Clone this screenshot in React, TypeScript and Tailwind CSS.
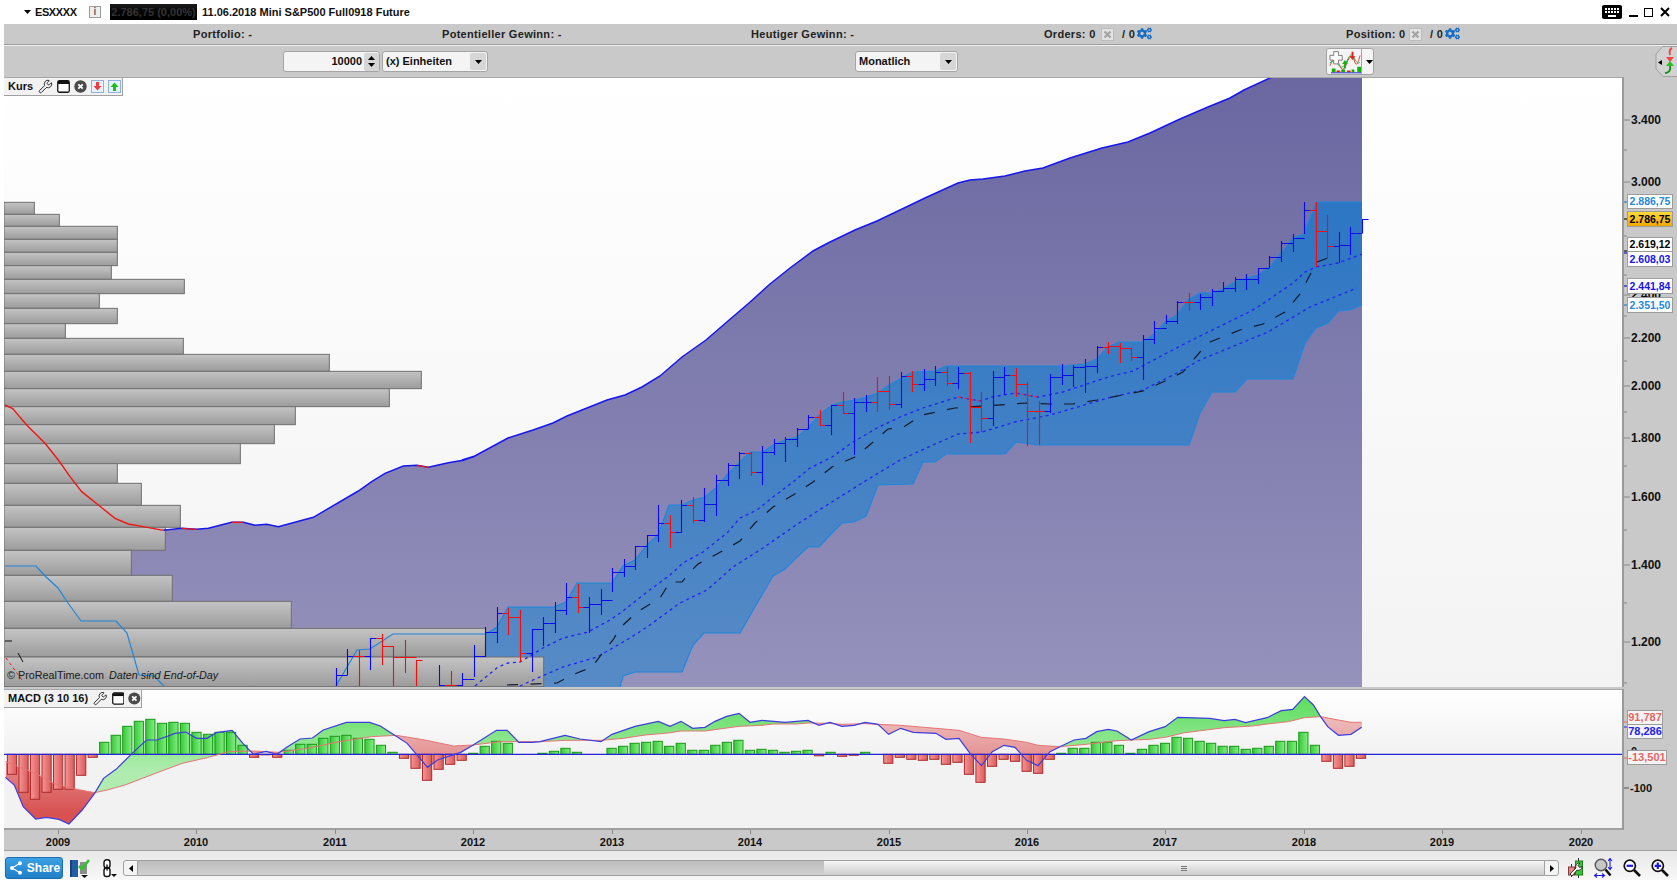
import React from 'react';
import { Wrench } from 'lucide-react';
import { FaCogs } from 'react-icons/fa';
import { MdKeyboard, MdShare } from 'react-icons/md';

type Pt = number[];

const toPts = (pts: Pt[]) => pts.map(([x, y]) => `${x},${y}`).join(' ');
// raw values were read off zoomed crops: x / sx + ox, y / 3 + oy
const crop = (raw: Pt[], ox: number, oy: number, sx = 3) => raw.map(([x, y]) => [ox + x / sx, oy + y / 3]);

// volume profile: [top, right], last entry closes the stack
const profile: Pt[] = [
  [67, 103], [103, 178], [139, 352], [178, 352], [217, 352], [257, 334], [298, 553], [341, 298], [385, 352],
  [431, 196], [475, 550], [523, 988], [574, 1264], [626, 1168], [680, 886], [734, 823], [791, 721], [851, 352],
  [910, 424], [976, 541], [1042, 496], [1111, 394], [1186, 517], [1264, 874], [1345, 1457], [1431, 1631], [1520, 0],
];

const redStart: Pt[] = crop([[15, 675], [38, 686], [80, 735], [135, 790], [175, 840], [210, 890], [245, 935], [295, 975], [345, 1015], [385, 1032], [430, 1040], [490, 1051]], 0, 180);
const blueLine: Pt[] = [
  ...crop([[490, 1051], [545, 1045], [590, 1048], [625, 1045], [695, 1027], [730, 1027], [765, 1036], [800, 1033], [835, 1040], [940, 1012], [1075, 933], [1115, 905], [1155, 880], [1210, 858], [1250, 856], [1285, 862], [1345, 848], [1390, 841], [1425, 828]], 0, 180),
  [462, 460], [473, 457], [508, 438], [533, 430], [553, 423], [567, 416], [587, 408], [607, 400], [625, 395], [642, 387], [660, 376], [682, 357], [706, 340], [728, 321], [749, 303], [770, 284], [790, 268], [813, 251], [828, 243], [855, 230], [877, 221],
  [900, 210], [925, 198], [958, 183], [970, 180], [983, 179], [1005, 176], [1025, 171], [1043, 168], [1070, 158], [1102, 148], [1128, 142], [1150, 133], [1180, 119], [1208, 107], [1230, 98], [1244, 90], [1272, 77],
];
const topLine: Pt[] = [...redStart, ...blueLine, [1362, 77]];
const redParts: Pt[][] = [
  redStart,
  crop([[545, 1045], [590, 1048]], 0, 180),
  crop([[695, 1027], [730, 1027]], 0, 180),
  crop([[1250, 856], [1285, 862]], 0, 180),
];

const bandUpper: Pt[] = [
  [486, 634], [497, 627], [508, 607], [554, 607], [566, 602], [577, 583], [612, 583], [623, 566], [635, 560], [647, 545], [658, 535], [669, 505], [682, 505], [693, 500], [705, 497], [716, 488], [727, 475], [739, 463], [750, 452], [763, 452], [773, 445], [785, 440], [797, 437], [808, 428], [819, 415], [832, 405], [843, 402], [855, 400], [866, 397], [878, 393], [889, 385],
  [900, 379], [912, 372], [935, 371], [946, 366], [1063, 366], [1085, 364], [1097, 359], [1108, 347], [1119, 342], [1143, 342], [1154, 334], [1166, 321], [1177, 315], [1188, 300], [1200, 293], [1212, 293], [1223, 289], [1235, 282], [1247, 278], [1258, 275], [1270, 267], [1282, 252], [1293, 238], [1304, 234], [1316, 202], [1362, 202],
];
const bandStart: Pt[] = [
  [5, 566], [36, 566], [45, 576], [58, 588], [68, 603], [81, 621], [116, 621], [127, 633], [139, 675], [154, 676], [164, 686],
];
const bandEarly: Pt[] = [[336, 686], [357, 650], [370, 649], [393, 634], [486, 634]];
const bandLower: Pt[] = [
  [1362, 305], [1350, 310], [1338, 311], [1328, 323], [1316, 328], [1305, 343], [1293, 379], [1247, 379], [1235, 392], [1212, 392], [1200, 413], [1189, 445], [1038, 445], [1016, 442], [1005, 454], [946, 454], [935, 462], [923, 462], [913, 484], [878, 485], [866, 516], [854, 522], [842, 523], [832, 533], [819, 547], [808, 547], [797, 557], [785, 569], [773, 576], [763, 593], [740, 633], [704, 633], [693, 645], [682, 672], [635, 672], [623, 676], [620, 687],
];

const upperMa: Pt[] = [
  [475, 686], [498, 667], [508, 663], [520, 662], [543, 648], [563, 638], [588, 632], [610, 620], [623, 611], [647, 592], [670, 575], [683, 563], [703, 552], [727, 533], [740, 518], [757, 510], [773, 497], [793, 482], [810, 468], [832, 457], [853, 442], [877, 428], [900, 417], [923, 408], [958, 397], [980, 401], [992, 397], [1015, 393], [1038, 397], [1063, 392], [1108, 377], [1133, 371], [1167, 353], [1188, 342], [1247, 313], [1258, 307], [1293, 283], [1305, 272], [1316, 267], [1338, 263], [1362, 254],
];
const lowerMa: Pt[] = [
  [520, 686], [533, 680], [563, 667], [597, 657], [630, 638], [647, 627], [680, 603], [707, 590], [733, 567], [763, 548], [793, 527], [827, 505], [867, 480], [900, 460], [933, 445], [958, 434], [982, 432], [1015, 422], [1050, 415], [1108, 398], [1143, 390], [1177, 373], [1200, 360], [1268, 332], [1310, 307], [1357, 288],
];
const midMa: Pt[] = [
  [507, 685], [557, 683], [572, 675], [592, 667], [607, 647], [613, 640], [620, 628], [637, 612], [660, 598], [670, 582], [682, 582], [690, 572], [698, 564], [717, 554], [740, 541], [755, 523], [773, 507], [793, 495], [813, 482], [832, 467], [855, 457], [872, 443], [888, 429], [902, 428], [922, 415], [955, 408], [1027, 403], [1050, 404], [1073, 404], [1097, 400], [1143, 391], [1165, 381], [1183, 372], [1200, 352], [1210, 342], [1240, 330], [1263, 324], [1285, 312], [1300, 294], [1311, 273], [1317, 262], [1328, 258],
];

// monthly bars left to right: [high, low, close, red]
const ohlc: (number[] | null)[] = [
  [668, 690, 675], [649, 675, 656], [650, 690, 656, 1], [638, 670, 638], [634, 665, 646, 1], [646, 690, 657, 1], [640, 673, 657, 1], [660, 690, 660, 1], null,
  [665, 690, 685], [671, 690, 685, 1], [673, 686, 679], [645, 677, 656], [627, 657, 632], [607, 643, 613], [608, 635, 617, 1], [610, 662, 653, 1], [629, 672, 629], [617, 646, 623], [602, 633, 610],
  [583, 615, 597], [584, 613, 607, 1], [597, 633, 604], [589, 615, 600], [568, 592, 572], [559, 577, 566], [546, 570, 546], [535, 558, 535], [505, 542, 523], [515, 548, 532, 1],
  [500, 533, 505], [497, 523, 520, 1], [488, 522, 504], [475, 516, 480], [463, 486, 465], [452, 479, 453], [452, 476, 472, 1], [446, 485, 452], [439, 455, 443], [437, 462, 439],
  [428, 447, 429], [415, 429, 417], [410, 426, 425, 1], [405, 435, 405], [392, 414, 413, 1], [398, 455, 402], [395, 412, 402], [377, 412, 391, 1], [376, 410, 404, 1], [372, 408, 376],
  [371, 392, 384, 1], [369, 391, 379], [366, 386, 372], [367, 386, 383, 1], [367, 389, 373], [372, 443, 407, 1], [392, 432, 418, 1], [371, 426, 377], [367, 395, 375], [368, 397, 384, 1],
  [382, 446, 411, 1], [401, 445, 411, 1], [374, 413, 377], [364, 385, 375], [365, 387, 367], [359, 393, 366], [346, 373, 347], [342, 354, 346, 1], [343, 363, 348, 1], [348, 361, 357, 1],
  [335, 380, 339], [321, 344, 328], [315, 324, 321], [301, 324, 302], [293, 311, 302, 1], [294, 310, 297], [289, 306, 291], [282, 292, 288], [277, 292, 279], [274, 290, 279],
  [268, 284, 268], [256, 268, 257], [241, 262, 243], [234, 252, 238], [202, 234, 210], [202, 267, 231, 1], [215, 258, 246, 1], [232, 263, 245], [227, 255, 233], [219, 233, 219],
];
const stemX = (i: number) => Math.round(1361.7 - 11.53 * (ohlc.length - 1 - i)) + 0.5;

// macd histogram, px above the zero line
const hist = [
  -20, -38, -45, -38, -35, -35, -21, -3, 12, 19, 28, 33, 35, 31, 32, 31, 22, 20, 22, 22, 9, -3, -0.5, -3, 4, 10, 10, 16, 18, 19, 16, 15, 9, 2, -4, -14, -26, -15, -10, -6, 1, 8, 13, 11, 0, 0,
  1, 3, 6, 2, 0, 0, 6, 8, 11, 12, 13, 8, 11, 4, 4, 9, 12, 14, 4, 5, 4, 2, 3, 4, -1.5, 2, -2, -1, 2, 0, -9, -3, -5, -6, -5, -10, -8, -20, -28, -12, -5, -7, -17, -19, -5, 1, 6, 6, 12, 12,
  9, 1, 5, 9, 11, 17, 16, 13, 11, 8, 8, 5, 6, 8, 13, 13, 22, 9, -7, -14, -12, -4,
];
const ZERO = 754.3;

const macdLine: Pt[] = [
  ...crop([[15, 472], [40, 495], [65, 560], [100, 597], [130, 592], [165, 598], [193, 612], [230, 570], [265, 520], [290, 475], [325, 448], [370, 400], [410, 360], [440, 360], [490, 340], [520, 336], [550, 355], [580, 355], [605, 338], [650, 331], [680, 370], [710, 403], [745, 394], [775, 403], [805, 380], [840, 357], [875, 354], [905, 330], [970, 307], [1035, 307], [1065, 318], [1105, 346], [1140, 370], [1197, 442], [1225, 420], [1290, 397], [1325, 375], [1390, 331], [1420, 331], [1453, 367], [1490, 367]], 0, 620, 2.8),
  ...crop([[0, 140], [75, 121], [120, 132], [183, 140], [216, 118], [285, 94], [355, 79], [390, 94], [423, 79], [458, 100], [495, 97], [525, 79], [560, 64], [597, 55], [630, 82], [666, 76], [735, 82], [804, 76], [837, 91]], 540, 695),
  ...crop([[0, 82], [36, 94], [72, 91], [105, 82], [144, 88], [176, 118], [212, 100], [250, 112], [318, 115], [348, 133], [387, 130], [420, 175], [454, 212], [487, 170], [522, 151], [555, 157], [590, 196], [624, 212], [660, 170], [690, 155], [732, 135], [768, 130], [800, 110], [835, 103]], 830, 695),
  ...crop([[0, 153], [40, 180], [90, 155], [135, 140], [170, 112], [260, 115], [300, 122], [330, 118], [360, 128], [420, 113], [460, 92], [492, 88], [525, 50], [550, 75], [570, 110], [590, 140], [620, 166], [655, 163], [685, 142]], 1117, 680, 2.8),
];
const signalLine: Pt[] = [
  ...crop([[15, 425], [100, 460], [150, 490], [200, 505], [265, 518], [300, 510], [350, 495], [430, 462], [510, 430], [580, 413], [640, 395], [710, 393], [780, 397], [860, 385], [950, 365], [1040, 350], [1110, 346], [1190, 360], [1270, 378], [1325, 375], [1400, 365]], 0, 620, 2.8),
  ...crop([[0, 140], [75, 136], [183, 136], [250, 130], [315, 120], [385, 114], [423, 108], [495, 108], [597, 94], [666, 91], [700, 87], [770, 87], [804, 84]], 540, 695),
  ...crop([[0, 85], [36, 88], [105, 86], [144, 88], [212, 91], [318, 100], [387, 106], [454, 127], [522, 132], [590, 142], [624, 151], [690, 155], [768, 148], [835, 140]], 830, 695),
  ...crop([[0, 182], [40, 180], [90, 178], [135, 172], [190, 158], [250, 150], [300, 143], [380, 138], [420, 132], [480, 125], [525, 113], [570, 110], [620, 120], [655, 127], [685, 127]], 1117, 680, 2.8),
];

const interp = (line: Pt[], x: number) => {
  for (let i = 1; i < line.length; i++) {
    if (x <= line[i][0]) {
      const [x0, y0] = line[i - 1];
      const [x1, y1] = line[i];
      return y0 + ((y1 - y0) * (x - x0)) / (x1 - x0);
    }
  }
  return line[line.length - 1][1];
};

const macdRuns = (() => {
  const runs: { up: boolean; a: Pt[]; b: Pt[] }[] = [];
  for (let x = 6; x <= 1362; x++) {
    const a = interp(macdLine, x);
    const b = interp(signalLine, x);
    const up = a < b;
    const last = runs[runs.length - 1];
    if (last && last.up === up) {
      last.a.push([x, a]);
      last.b.push([x, b]);
    } else {
      runs.push({ up, a: [[x, a]], b: [[x, b]] });
    }
  }
  return runs;
})();

const priceLabels = [
  ['3.400', 120], ['3.000', 182], ['2.400', 295], ['2.200', 338], ['2.000', 386], ['1.800', 438], ['1.600', 497], ['1.400', 565], ['1.200', 642],
] as const;
const priceTicks = [120, 150, 182, 202, 219, 236, 251, 253, 275, 286, 295, 305, 316, 338, 361, 386, 412, 438, 466, 497, 530, 565, 603, 642, 683];
const priceTags = [
  { text: '2.886,75', top: 194, h: 15, cls: 'text-[#1e8ae0] bg-white' },
  { text: '2.786,75', top: 211, h: 16, cls: 'text-black bg-linear-to-b from-[#ffd83a] to-[#eea800]' },
  { text: '2.619,12', top: 237, h: 15, cls: 'text-black bg-white' },
  { text: '2.608,03', top: 251, h: 16, cls: 'text-[#1414ee] bg-white' },
  { text: '2.441,84', top: 278, h: 16, cls: 'text-[#1414ee] bg-white' },
  { text: '2.351,50', top: 297, h: 16, cls: 'text-[#1e8ae0] bg-white' },
];
const macdTags = [
  { text: '91,787', top: 710, w: 36, cls: 'text-[#e86464]' },
  { text: '78,286', top: 724, w: 36, cls: 'text-[#2222ee]' },
  { text: '-13,501', top: 750, w: 40, cls: 'text-[#e86464]' },
];
const years = [
  ['2009', 58], ['2010', 196], ['2011', 335], ['2012', 473], ['2013', 612], ['2014', 750], ['2015', 889], ['2016', 1027], ['2017', 1165], ['2018', 1304], ['2019', 1442], ['2020', 1581],
] as const;

const WindowIcon = () => (
  <svg width="13" height="13" viewBox="0 0 13 13">
    <rect x="0.75" y="0.75" width="11.5" height="11.5" rx="1.5" fill="#fff" stroke="#111" strokeWidth="1.3" />
    <rect x="1" y="1" width="11" height="3" fill="#111" />
  </svg>
);

const CloseIcon = () => (
  <svg width="13" height="13" viewBox="0 0 13 13">
    <circle cx="6.5" cy="6.5" r="6.2" fill="#4a4a4a" />
    <path d="M4.3 4.3l4.4 4.4M8.7 4.3l-4.4 4.4" stroke="#fff" strokeWidth="1.8" />
  </svg>
);

const DocArrow = ({ up }: { up?: boolean }) => (
  <svg width="13" height="13" viewBox="0 0 13 13">
    <rect x="0.5" y="0.5" width="12" height="12" fill="#e8f0fa" stroke="#8fb4dc" />
    {up ? (
      <path d="M6.500 2.500L10.500 7H8v4H5V7H2.500z" fill="#18c018" />
    ) : (
      <path d="M6.500 10.500L10.500 6H8V2H5v4H2.500z" fill="#ee3a40" />
    )}
  </svg>
);

const WrenchIcon = () => <Wrench size={15} strokeWidth={1.3} className="text-black" />;

const Disabled = () => (
  <svg width="13" height="13" viewBox="0 0 13 13" className="shrink-0">
    <rect x="0.5" y="0.5" width="12" height="12" fill="#e2e2e2" stroke="#bdbdbd" />
    <path d="M3.500 3.500l6 6M9.500 3.500l-6 6" stroke="#a4a4a4" strokeWidth="2.4" />
  </svg>
);

const Caret = ({ className = '' }: { className?: string }) => (
  <svg width="7" height="4" viewBox="0 0 7 4" className={className}>
    <path d="M0 0h7L3.500 4z" fill="#000" />
  </svg>
);

const ArrowBox = () => (
  <span className="flex h-[17px] w-[16px] items-center justify-center rounded-[2px] bg-[#d6d6d6]">
    <Caret />
  </span>
);

const Select = ({ label, className }: { label: string; className: string }) => (
  <div className={`flex h-[21px] items-center justify-between rounded-[3px] border border-[#a4a4a4] bg-[#f4f4f4] pl-[3px] pr-[1px] ${className}`}>
    <span>{label}</span>
    <ArrowBox />
  </div>
);

const Gears = () => <FaCogs size={15} className="shrink-0 -translate-y-[1px] text-[#1b6cc4]" />;

const StatPair = () => (
  <>
    <span className="w-[17px] pl-[1px]">
      <Disabled />
    </span>
    <span className="ml-[5px] w-[15px] font-bold">/ 0</span>
    <Gears />
  </>
);

const MainChart = () => (
  <svg width="1618" height="610" viewBox="4 77 1618 610" className="-mt-px block">
    <defs>
      <linearGradient id="areaFill" gradientUnits="userSpaceOnUse" x1="0" y1="77" x2="0" y2="687">
        <stop offset="0" stopColor="#6a67a1" />
        <stop offset="1" stopColor="#9592bc" />
      </linearGradient>
      <linearGradient id="bandFill" gradientUnits="userSpaceOnUse" x1="0" y1="200" x2="0" y2="687">
        <stop offset="0" stopColor="#2c76c4" />
        <stop offset="1" stopColor="#578bc6" />
      </linearGradient>
      <linearGradient id="profileFill" x1="0" y1="0" x2="0" y2="1">
        <stop offset="0" stopColor="#c4c4c4" />
        <stop offset="1" stopColor="#9c9c9c" />
      </linearGradient>
    </defs>
    <polygon points={toPts([...topLine, [1362, 687], [5, 687]])} fill="url(#areaFill)" />
    <polygon points={toPts([...bandUpper, ...bandLower, [486, 687]])} fill="url(#bandFill)" />
    {profile.slice(0, -1).map(([top, right], i) => {
      const y = 180 + top / 3;
      const bottom = 180 + profile[i + 1][0] / 3;
      return <rect key={i} x="4" y={y} width={right / 3 - 4} height={Math.min(bottom, 690) - y} fill="url(#profileFill)" stroke="#6f6f6f" strokeWidth="1" />;
    })}
    <polyline points={toPts(blueLine)} fill="none" stroke="#1616ee" strokeWidth="1.5" />
    {redParts.map((p, i) => (
      <polyline key={i} points={toPts(p)} fill="none" stroke="#f01616" strokeWidth="1.4" />
    ))}
    <polyline points={toPts(bandStart)} fill="none" stroke="#1f86dc" strokeWidth="1.2" />
    <polyline points={toPts(bandEarly)} fill="none" stroke="#1f86dc" strokeWidth="1.2" />
    <polyline points={toPts(bandUpper)} fill="none" stroke="#1f86dc" strokeWidth="1.2" />
    <polyline points={toPts(bandLower)} fill="none" stroke="#1f86dc" strokeWidth="1.2" />
    <polyline points={toPts(upperMa)} fill="none" stroke="#2222f0" strokeWidth="1.3" strokeDasharray="3 3.500" />
    <polyline points={toPts(lowerMa)} fill="none" stroke="#2222f0" strokeWidth="1.3" strokeDasharray="3 3.500" />
    <polyline points="958,397 980,401" fill="none" stroke="#d83048" strokeWidth="1.3" strokeDasharray="3 3.500" />
    <polyline points="1015,393 1038,397" fill="none" stroke="#d83048" strokeWidth="1.3" strokeDasharray="3 3.500" />
    <polyline points={toPts(midMa)} fill="none" stroke="#141a2a" strokeWidth="1.2" strokeDasharray="11 12.500" />
    <path d="M5 641h7M18 653l5 9" stroke="#111" strokeWidth="1" fill="none" />
    <path d="M6 658l16 22" stroke="#f01616" strokeWidth="1" strokeDasharray="3 3" fill="none" />
    {ohlc.map((b, i) => {
      if (!b) return null;
      const x = stemX(i);
      const prev = ohlc[i - 1];
      const color = b[3] ? '#ff0808' : '#0808f4';
      return (
        <path
          key={i}
          d={`M${x} ${b[0]}V${Math.min(b[1], 686)}M${x} ${b[2] + 0.5}h6${prev ? `M${x} ${prev[2] + 0.5}h-6` : ''}`}
          stroke={color}
          strokeWidth="1.1"
          fill="none"
        />
      );
    })}
  </svg>
);

const MacdChart = () => (
  <svg width="1618" height="141" viewBox="4 689 1618 141" className="-mt-px block">
    <defs>
      <linearGradient id="upFill" gradientUnits="userSpaceOnUse" x1="0" y1="700" x2="0" y2="772">
        <stop offset="0" stopColor="#5fde5f" />
        <stop offset="1" stopColor="#b0ecb0" />
      </linearGradient>
      <linearGradient id="downFill" gradientUnits="userSpaceOnUse" x1="0" y1="722" x2="0" y2="812">
        <stop offset="0" stopColor="#edb8b8" />
        <stop offset="1" stopColor="#d85252" />
      </linearGradient>
      <linearGradient id="greenBar" x1="0" y1="0" x2="1" y2="0">
        <stop offset="0" stopColor="#38c838" />
        <stop offset="1" stopColor="#84ee84" />
      </linearGradient>
      <linearGradient id="redBar" x1="0" y1="0" x2="1" y2="0">
        <stop offset="0" stopColor="#f89494" />
        <stop offset="1" stopColor="#d85c5c" />
      </linearGradient>
    </defs>
    {macdRuns.map((r, i) => (
      <polygon key={i} points={toPts([...r.a, ...[...r.b].reverse()])} fill={r.up ? 'url(#upFill)' : 'url(#downFill)'} />
    ))}
    {hist.map((v, k) => {
      if (v === 0) return null;
      const x = 12 + 11.53 * k - 4.6;
      return v > 0 ? (
        <rect key={k} x={x} y={ZERO - v} width="9.2" height={v} fill="url(#greenBar)" stroke="#149a14" strokeWidth="1" />
      ) : (
        <rect key={k} x={x} y={ZERO} width="9.2" height={-v} fill="url(#redBar)" stroke="#ac2a2a" strokeWidth="1" />
      );
    })}
    <line x1="4" x2="1622" y1={ZERO} y2={ZERO} stroke="#2424d8" strokeWidth="1.2" />
    <polyline points={toPts(signalLine)} fill="none" stroke="#e87474" strokeWidth="1" />
    <polyline points={toPts(macdLine)} fill="none" stroke="#3c3ce0" strokeWidth="1.2" />
  </svg>
);

const IndicatorIcon = () => (
  <svg width="32" height="24" viewBox="0 0 34 24">
    <path d="M1 16c4-10 7-8 10-1s5 6 8-2 6-9 8-2 4 2 6-6" fill="none" stroke="#e03030" strokeWidth="1" />
    <path d="M1 13c3-3 6-2 9 2s6 3 9-4 5-9 8-3 4 6 6 4" fill="none" stroke="#22b040" strokeWidth="1" />
    <path d="M5 1h5v4h4v5h-4v4H5v-4H1V5h4z" fill="#fff" stroke="#777" strokeWidth="1" />
    <path d="M14 14l3-4 3 4h-2v5h-2v-5z" fill="#10b010" />
    <path d="M22 6l3 4 3-4h-2V1h-2v5z" fill="#ee1c1c" />
    <path d="M3 19h4v4H3zM13 20h4v3h-4zM24 20h3v3h-3zM30 17h4v6h-4z" fill="#10b010" />
    <path d="M8 21h4v2H8zM19 21h4v2h-4z" fill="#e02020" />
    <path d="M2 23.500h32" stroke="#1a22c8" strokeWidth="1" />
  </svg>
);

const SideTab = () => (
  <svg width="22" height="31" viewBox="0 0 22 31">
    <path d="M22 0.500H8L1 8v15l7 7.500h14" fill="#d2d2d2" stroke="#a0a0a0" />
    <path d="M7 14v5l-4-2.500z" fill="#000" />
    <path d="M17 2c-2 1-3 3-2 7" fill="none" stroke="#f04848" strokeWidth="2" />
    <path d="M15 16l-4-5h8z" fill="#f04848" />
    <path d="M15 15l-4 5h8z" fill="#28c028" />
    <path d="M15 20c1 4-1 7-5 7" fill="none" stroke="#189018" strokeWidth="2" />
  </svg>
);

const Magnifier = ({ mark }: { mark: 'plus' | 'minus' }) => (
  <svg width="18" height="18" viewBox="0 0 18 18" className="shrink-0">
    <circle cx="6.800" cy="6.800" r="5.600" fill="#fff" stroke="#111" strokeWidth="1.700" />
    <path d="M11 11l6 6" stroke="#111" strokeWidth="2.600" />
    <path d={mark === 'plus' ? 'M3.600 6.800h6.400M6.800 3.600v6.400' : 'M3.600 6.800h6.400'} stroke="#1a1ae0" strokeWidth="2.200" />
  </svg>
);

const FitZoom = () => (
  <svg width="19" height="20" viewBox="0 0 19 20" className="shrink-0">
    <circle cx="7" cy="7" r="5.800" fill="#c6c6c6" stroke="#555" strokeWidth="1.400" />
    <path d="M11.500 11.500l5 6" stroke="#111" strokeWidth="2.600" />
    <path d="M16 1v10M14 3l2-2.500L18 3M14 9l2 2.500L18 9" stroke="#1a1ae0" strokeWidth="1.100" fill="none" />
    <path d="M1 17.500h9M3 15.500l-2.500 2 2.500 2M8 15.500l2.500 2-2.500 2" stroke="#1a1ae0" strokeWidth="1.100" fill="none" />
  </svg>
);

const CandleWrench = () => (
  <svg width="15" height="20" viewBox="0 0 15 20" className="shrink-0">
    <path d="M10.500 0v20M3.500 6v13" stroke="#333" strokeWidth="1" />
    <rect x="7.500" y="3" width="7" height="14" fill="#3cc43c" stroke="#1c7c1c" />
    <rect x="0.500" y="9" width="6" height="8" fill="#e88888" stroke="#803838" />
    <path d="M2 16l6-6c-1-3 1-5 4-5l-2 2.500 1.500 2 2.500-1c0 3-3 4.500-5 3.500l-5 6z" fill="#fff" stroke="#111" strokeWidth="0.800" />
  </svg>
);

const PositionIcon = () => (
  <svg width="20" height="19" viewBox="0 0 20 19" className="shrink-0">
    <rect x="0" y="1" width="8" height="17" fill="#17437f" />
    <rect x="2" y="1" width="6" height="17" fill="#2a6fc0" opacity="0.6" />
    <rect x="10" y="3" width="7" height="12" fill="#8c8c8c" />
    <path d="M9 7l3 3 7-9" fill="none" stroke="#2cc62c" strokeWidth="2.600" />
    <path d="M11 16h7l-3.500 3z" fill="#111" />
  </svg>
);

const LinkIcon = () => (
  <svg width="15" height="19" viewBox="0 0 15 19" className="shrink-0">
    <rect x="2" y="0.800" width="6" height="8" rx="2.600" fill="#fff" stroke="#111" strokeWidth="1.400" />
    <rect x="2" y="9" width="6" height="8.500" rx="2.600" fill="#fff" stroke="#111" strokeWidth="1.400" />
    <path d="M5 5.500v6" stroke="#111" strokeWidth="1.400" />
    <path d="M9 15h6l-3 3z" fill="#111" />
  </svg>
);

export default function App() {
  return (
    <div className="flex h-[886px] w-[1677px] flex-col overflow-hidden bg-white font-['Liberation_Sans',Arial,sans-serif] text-[11px] font-bold leading-none text-[#111]">
      {/* title bar */}
      <div className="flex h-[24px] items-center pl-[24px]">
        <Caret />
        <span className="ml-[4px] w-[54px] tracking-[-0.4px]">ESXXXX</span>
        <span className="flex h-[12px] w-[12px] items-center justify-center border border-[#9a9a9a] bg-[#eeeeee] text-[10px] leading-none text-[#666]">i</span>
        <span className="ml-[9px] flex h-[16px] w-[87px] items-center justify-center bg-linear-to-b from-[#1c1c1c] to-black text-[#333]">2.786,75 (0,00%)</span>
        <span className="ml-[5px]">11.06.2018 Mini S&amp;P500 Full0918 Future</span>
        <span className="ml-auto flex items-center pr-[7px]">
          <MdKeyboard size={24} className="-my-1 text-black" />
          <span className="ml-[5px] mt-[7px] h-[2px] w-[9px] bg-black" />
          <span className="ml-[6px] h-[9px] w-[9px] border-[1.5px] border-black" />
          <svg width="10" height="10" viewBox="0 0 10 10" className="ml-[7px]">
            <path d="M1 1l8 8M9 1l-8 8" stroke="#000" strokeWidth="2" />
          </svg>
        </span>
      </div>

      {/* toolbars */}
      <div className="ml-[4px] flex flex-1 flex-col bg-[#c9c9c9]">
        <div className="flex h-[21px] shrink-0 items-center border-b border-[#9e9e9e] pl-[189px] tracking-[0.3px] text-[#222]">
          <span className="w-[249px]">Portfolio: -</span>
          <span className="w-[309px]">Potentieller Gewinn: -</span>
          <span className="w-[293px]">Heutiger Gewinn: -</span>
          <span className="flex w-[302px] items-center">
            <span className="w-[56px]">Orders: 0</span>
            <StatPair />
          </span>
          <span className="flex items-center">
            <span className="w-[62px]">Position: 0</span>
            <StatPair />
          </span>
        </div>
        <div className="flex h-[32px] shrink-0 items-center border-t border-t-[#eeeeee] pl-[279px]">
          <div className="flex h-[21px] w-[97px] items-center justify-end rounded-[3px] border border-[#a4a4a4] bg-[#f4f4f4]">
            <span className="mr-[2px]">10000</span>
            <span className="flex h-[18px] w-[15px] flex-col items-center justify-center gap-[3px] rounded-[2px] bg-[#d6d6d6]">
              <Caret className="rotate-180" />
              <Caret />
            </span>
          </div>
          <Select label="(x) Einheiten" className="ml-[2px] w-[106px]" />
          <Select label="Monatlich" className="ml-[367px] w-[103px]" />
          <div className="ml-[368px] flex h-[27px] w-[48px] items-center rounded-[3px] border border-[#a4a4a4] bg-[#f4f4f4]">
            <span className="flex h-full w-[35px] items-center justify-center border-r border-[#a4a4a4] pl-[1px]">
              <IndicatorIcon />
            </span>
            <Caret className="ml-[4px]" />
          </div>
          <div className="ml-auto">
            <SideTab />
          </div>
        </div>

        {/* price chart */}
        <div className="flex h-[610px] shrink-0">
          <div className="relative w-[1618px] overflow-hidden border-t border-[#a8a8a8] bg-linear-to-b from-white to-[#f3f3f3]">
            <MainChart />
            <div className="absolute left-0 top-0 flex h-[18px] w-[119px] items-center gap-[4px] border-b border-r border-[#a0a0a0] bg-[#f2f2f2] pl-[4px]">
              <span className="mr-[1px]">Kurs</span>
              <WrenchIcon />
              <WindowIcon />
              <CloseIcon />
              <DocArrow />
              <DocArrow up />
            </div>
            <p className="absolute bottom-[6px] left-[3px] text-[10.8px] font-normal leading-none text-[#1a1a1a]">
              © ProRealTime.com <em className="ml-[2px]">Daten sind End-of-Day</em>
            </p>
          </div>
          <div className="relative flex-1 border-l-2 border-[#9a9a9a] text-[12px]">
            <svg width="6" height="610" viewBox="0 77 6 610" className="absolute left-0 top-0">
              {priceTicks.map((y) => (
                <line key={y} x1="0" x2={priceLabels.some((l) => l[1] === y) ? 6 : 3} y1={y} y2={y} stroke="#888" />
              ))}
              <path d="M0 202h5" stroke="#1e8ae0" />
              <path d="M0 219h5M0 251h5" stroke="#111" />
              <path d="M0 253h5M0 286h5" stroke="#1414ee" />
              <path d="M0 305h5" stroke="#1e8ae0" />
            </svg>
            {priceLabels.map(([label, y]) => (
              <span key={label} className="absolute left-[7px] -translate-y-1/2" style={{ top: y - 77 }}>
                {label}
              </span>
            ))}
            {priceTags.map((t) => (
              <span
                key={t.text}
                className={`absolute left-[3px] flex w-[46px] items-center justify-center border border-[#9c9c9c] text-[10.5px] ${t.cls}`}
                style={{ top: t.top - 77, height: t.h }}
              >
                {t.text}
              </span>
            ))}
          </div>
        </div>

        <div className="h-[2px] shrink-0" />

        {/* macd */}
        <div className="flex h-[141px] shrink-0">
          <div className="relative w-[1618px] overflow-hidden border-b-2 border-t border-b-[#a0a0a0] border-t-[#a8a8a8] bg-linear-to-b from-white from-0% to-[#f2f2f2] to-45%">
            <MacdChart />
            <div className="absolute left-0 top-0 flex h-[18px] w-[138px] items-center gap-[4px] whitespace-nowrap border-b border-r border-[#a0a0a0] bg-[#f2f2f2] pl-[4px]">
              <span className="mr-[1px]">MACD (3 10 16)</span>
              <WrenchIcon />
              <WindowIcon />
              <CloseIcon />
            </div>
          </div>
          <div className="relative flex-1 border-l-2 border-[#9a9a9a]">
            <svg width="6" height="141" viewBox="0 689 6 141" className="absolute left-0 top-0">
              <path d="M0 722h5M0 758h5" stroke="#e86464" />
              <path d="M0 727h5" stroke="#2222ee" />
              <path d="M0 788h5" stroke="#555" />
            </svg>
            <span className="absolute left-[7px] top-[57px]">0</span>
            <span className="absolute left-[6px] top-[94px]">-100</span>
            {macdTags.map((t) => (
              <span
                key={t.text}
                className={`absolute left-[3px] flex h-[15px] items-center justify-center border border-[#9c9c9c] bg-[#f4f4f4] ${t.cls}`}
                style={{ top: t.top - 689, width: t.w }}
              >
                {t.text}
              </span>
            ))}
          </div>
        </div>

        {/* time axis */}
        <div className="relative h-[21px] shrink-0 border-b border-[#a0a0a0]">
          {years.map(([label, x]) => (
            <React.Fragment key={label}>
              <span className="absolute top-0 h-[4px] w-px bg-[#8a8a8a]" style={{ left: x - 4 }} />
              <span className="absolute top-[7px] -translate-x-1/2" style={{ left: x - 4 }}>
                {label}
              </span>
            </React.Fragment>
          ))}
        </div>

        {/* bottom bar */}
        <div className="flex h-[29px] shrink-0 items-center bg-linear-to-b from-[#e8e8e8] to-[#f8f8f8] pb-[1px] pl-[1px] pt-[6px]">
          <button className="flex h-[22px] w-[58px] items-center justify-center gap-[3px] rounded-[3px] border border-[#1c70b0] bg-linear-to-b from-[#3ba0e4] to-[#1f80c8] text-[12px] text-white">
            <MdShare size={16} />
            Share
          </button>
          <span className="ml-[7px]">
            <PositionIcon />
          </span>
          <span className="ml-[12px]">
            <LinkIcon />
          </span>
          <div className="ml-[6px] flex h-[16px] flex-1 items-stretch">
            <span className="flex w-[15px] items-center justify-center rounded-l-[3px] border border-[#a0a0a0] bg-[#f4f4f4]">
              <svg width="4" height="7" viewBox="0 0 4 7"><path d="M4 0v7L0 3.500z" fill="#000" /></svg>
            </span>
            <span className="w-[686px] border-y border-[#a0a0a0] bg-linear-to-b from-[#bcbcbc] to-[#d2d2d2]" />
            <span className="flex flex-1 items-center justify-center border-y border-[#a0a0a0] bg-linear-to-b from-[#f6f6f6] to-[#cdcdcd]">
              <span className="flex h-[5px] w-[6px] flex-col justify-between">
                <i className="h-px bg-[#777]" />
                <i className="h-px bg-[#777]" />
                <i className="h-px bg-[#777]" />
              </span>
            </span>
            <span className="flex w-[15px] items-center justify-center rounded-r-[3px] border border-[#a0a0a0] bg-[#f4f4f4]">
              <svg width="4" height="7" viewBox="0 0 4 7"><path d="M0 0v7l4-3.500z" fill="#000" /></svg>
            </span>
          </div>
          <div className="flex w-[118px] items-center pl-[9px]">
            <CandleWrench />
            <span className="ml-[11px]">
              <FitZoom />
            </span>
            <span className="ml-[10px]">
              <Magnifier mark="minus" />
            </span>
            <span className="ml-[10px]">
              <Magnifier mark="plus" />
            </span>
          </div>
        </div>
      </div>
      <div className="h-[6px] shrink-0" />
    </div>
  );
}
